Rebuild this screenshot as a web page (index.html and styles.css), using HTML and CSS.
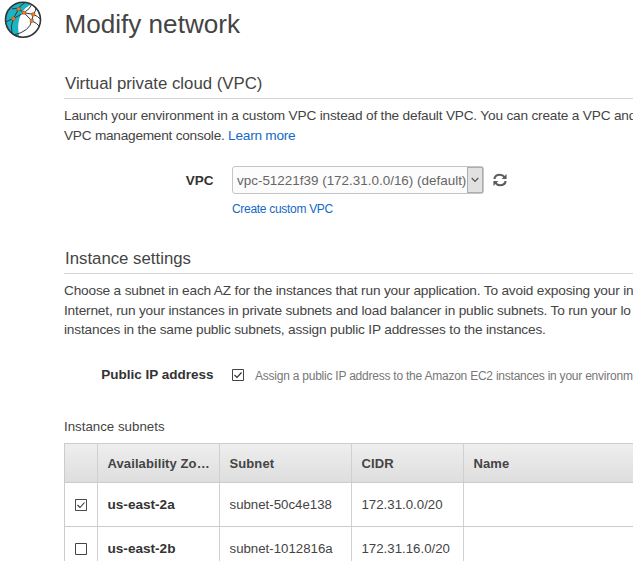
FILE: index.html
```html
<!DOCTYPE html>
<html lang="en">
<head>
<meta charset="utf-8">
<title>Modify network</title>
<link rel="stylesheet" href="styles.css">
</head>
<body>
<main class="page">
  <header class="masthead">
    <svg class="logo" viewBox="0 0 40 40">
      <defs><clipPath id="globe"><circle cx="20" cy="19.700" r="17.500"/></clipPath></defs>
      <circle cx="20" cy="19.700" r="17.500" fill="#fff"/>
      <g clip-path="url(#globe)">
        <path d="M0 0H27V5Q18 10 16 20Q14 29 17 40H0Z" fill="#19b5c5"/>
        <path d="M1 23Q6 20 10.400 18.700L15.500 9L21 12.700L10.400 18.700Q7 26 9 33M15.500 9Q17 5 23 2M15.500 9Q12 8 9 9M21 12.700L30.400 14.400L28.700 20.700L21 12.700M30.400 14.400Q35 16 38 20M30.400 14.400Q33 11 33 7M21 12.700Q27 9 29 4M28.700 20.700Q34 23 37 27M28.700 20.700Q27 31 11 35" fill="none" stroke="#343434" stroke-width="1"/>
      </g>
      <circle cx="20" cy="19.700" r="17.500" fill="none" stroke="#343434" stroke-width="1.600"/>
      <path d="M13.900 7.400h3.200v3.200h-3.200zM19.400 11.100h3.200v3.200h-3.200zM8.800 17.100h3.200v3.200h-3.200zM28.800 12.800h3.200v3.200h-3.200zM27.100 19.100h3.200v3.200h-3.200z" fill="#f47a20" stroke="#8b4a20" stroke-width=".4"/>
    </svg>
    <h1>Modify network</h1>
  </header>

  <section class="section vpc">
    <h2>Virtual private cloud (VPC)</h2>
    <div class="intro">
      <p>Launch your environment in a custom VPC instead of the default VPC. You can create a VPC and</p>
      <p class="console">VPC management console. <a>Learn more</a></p>
    </div>
    <div class="field">
      <label>VPC</label>
      <div class="select"><span class="select-text">vpc-51221f39 (172.31.0.0/16) (default)</span><span class="arrow"><svg viewBox="0 0 8 6"><path d="M.7 1L4 4.300L7.300 1" fill="none" stroke="#555" stroke-width="1.200"/></svg></span></div>
      <svg class="refresh" viewBox="0 0 14 14"><g fill="none" stroke="#5c5c5c" stroke-width="2.100"><path d="M1.300 6Q2.100 1.700 6.800 1.700Q9.800 1.700 11.800 4.300"/><path d="M12.700 8Q11.900 12.300 7.200 12.300Q4.200 12.300 2.200 9.700"/></g><path d="M13.600 1V5.900H8.700ZM.4 13V8.100H5.300Z" fill="#5c5c5c"/></svg>
    </div>
    <a class="create">Create custom VPC</a>
  </section>

  <section class="section settings">
    <h2>Instance settings</h2>
    <div class="intro">
      <p>Choose a subnet in each AZ for the instances that run your application. To avoid exposing your in</p>
      <p>Internet, run your instances in private subnets and load balancer in public subnets. To run your lo</p>
      <p>instances in the same public subnets, assign public IP addresses to the instances.</p>
    </div>
    <div class="public">
      <label>Public IP address</label>
      <svg class="check" viewBox="0 0 12 12"><path d="M.5.5h11v11H.5z" fill="#fff" stroke="#444"/><path d="M2.500 6L5 8.500L9.500 3.500" fill="none" stroke="#333" stroke-width="1.200"/></svg>
      <span class="hint">Assign a public IP address to the Amazon EC2 instances in your environm</span>
    </div>
  </section>

  <section class="subnets">
    <p class="caption">Instance subnets</p>
    <div class="row head"><div></div><div>Availability Zo…</div><div>Subnet</div><div>CIDR</div><div>Name</div></div>
    <div class="row"><div><svg class="check" viewBox="0 0 12 12"><path d="M.5.5h11v11H.5z" fill="#fff" stroke="#888"/><path d="M.5.5h11v11H.5z" fill="none" stroke="#111" stroke-dasharray="1 1"/><path d="M2.500 6L5 8.500L9.500 3.500" fill="none" stroke="#333" stroke-width="1.100"/></svg></div><div class="zone">us-east-2a</div><div>subnet-50c4e138</div><div>172.31.0.0/20</div><div></div></div>
    <div class="row"><div><svg class="check" viewBox="0 0 12 12"><path d="M.5.5h11v11H.5z" fill="#fff" stroke="#444"/></svg></div><div class="zone">us-east-2b</div><div>subnet-1012816a</div><div>172.31.16.0/20</div><div></div></div>
  </section>
</main>
</body>
</html>
```
FILE: styles.css
```css
* { box-sizing: border-box; }
html, body { margin: 0; height: 561px; overflow: hidden; background: #fff; }
body { font-family: "Liberation Sans", Arial, sans-serif; font-size: 13.25px; color: #444; }
h1, h2, p { margin: 0; font-weight: 400; white-space: nowrap; }
a { color: #146ac6; }
svg { display: block; flex: none; }
.page { width: 633px; height: 561px; overflow: hidden; }
.masthead { display: flex; height: 72px; padding-left: 2.5px; }
.logo { width: 40px; height: 40px; }
h1 { margin-left: 22px; padding-top: 9px; font-size: 26.1px; line-height: 30px; }
.section { margin-left: 64px; }
.vpc { height: 175px; }
h2 { height: 27px; padding-left: 1px; font-size: 16.8px; line-height: 24px; border-bottom: 1px solid #d5d5d5; }
.intro { padding-top: 7px; font-size: 13.65px; letter-spacing: -.185px; line-height: 19.5px; }
.console { letter-spacing: -.24px; }
.settings .intro { letter-spacing: -.17px; }
.field { display: flex; align-items: center; height: 28px; margin-top: 21px; }
.field label, .public label { width: 149.5px; margin-right: 18.5px; flex: none; text-align: right; font-size: 13.5px; font-weight: 700; color: #333; }
.select { display: flex; width: 252px; height: 28px; border: 1px solid #c5c5c5; border-radius: 3px; background: #fcfcfc; color: #666; }
.select-text { width: 234px; padding-left: 4px; font-size: 13.45px; line-height: 28px; white-space: nowrap; }
.arrow { width: 16px; display: grid; place-items: center; background: #e1e1e1; border: 1px solid #adadad; }
.arrow svg { width: 8px; height: 6px; }
.refresh { width: 14px; height: 14px; margin-left: 9px; }
.create { display: block; margin: 8px 0 0 168px; font-size: 12px; letter-spacing: -.3px; line-height: 14px; }
.settings { height: 172px; }
.public { display: flex; align-items: center; height: 20px; margin-top: 25px; }
.check { width: 12px; height: 12px; }
.hint { margin-left: 11px; padding-top: 2px; font-size: 12px; letter-spacing: -.23px; color: #777; white-space: nowrap; }
.subnets { margin-left: 64px; }
.caption { height: 24px; line-height: 16px; font-size: 13.3px; }
.row { display: grid; grid-template-columns: 33px 122px 132px 112px 1fr; height: 44px; border: solid #ccc; border-width: 0 0 1px 1px; }
.row > div { display: flex; align-items: center; padding-left: 9.5px; border-right: 1px solid #d0d0d0; white-space: nowrap; }
.row > div:last-child { border-right: 0; }
.head { height: 40px; border-top-width: 1px; background: linear-gradient(#eee, #dedede); font-weight: 700; font-size: 13px; letter-spacing: .1px; color: #444; }
.zone { font-weight: 700; font-size: 13.6px; color: #333; }
```
